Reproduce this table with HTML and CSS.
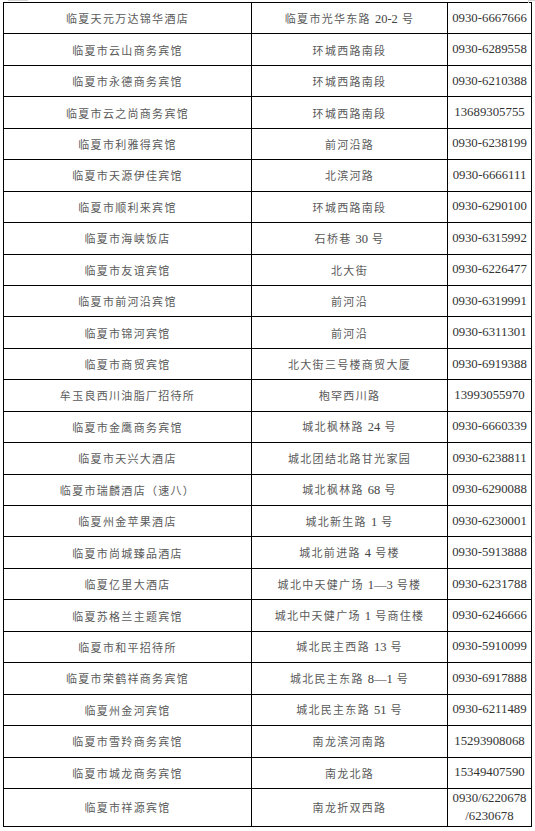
FILE: index.html
```html
<!DOCTYPE html>
<html lang="zh-CN">
<head>
<meta charset="utf-8">
<title>临夏宾馆列表</title>
<link rel="stylesheet" href="styles.css">
</head>
<body>
<div class="mark mark-tl"></div>
<div class="mark mark-tr"></div>
<table class="list">
<colgroup><col class="c1"><col class="c2"><col class="c3"></colgroup>
<tbody>
<tr><td>临夏天元万达锦华酒店</td><td>临夏市光华东路 <span class="num">20-2</span> 号</td><td class="tel">0930-6667666</td></tr>
<tr><td>临夏市云山商务宾馆</td><td>环城西路南段</td><td class="tel">0930-6289558</td></tr>
<tr><td>临夏市永德商务宾馆</td><td>环城西路南段</td><td class="tel">0930-6210388</td></tr>
<tr><td>临夏市云之尚商务宾馆</td><td>环城西路南段</td><td class="tel">13689305755</td></tr>
<tr><td>临夏市利雅得宾馆</td><td>前河沿路</td><td class="tel">0930-6238199</td></tr>
<tr><td>临夏市天源伊佳宾馆</td><td>北滨河路</td><td class="tel">0930-6666111</td></tr>
<tr><td>临夏市顺利来宾馆</td><td>环城西路南段</td><td class="tel">0930-6290100</td></tr>
<tr><td>临夏市海峡饭店</td><td>石桥巷 <span class="num">30</span> 号</td><td class="tel">0930-6315992</td></tr>
<tr><td>临夏市友谊宾馆</td><td>北大街</td><td class="tel">0930-6226477</td></tr>
<tr><td>临夏市前河沿宾馆</td><td>前河沿</td><td class="tel">0930-6319991</td></tr>
<tr><td>临夏市锦河宾馆</td><td>前河沿</td><td class="tel">0930-6311301</td></tr>
<tr><td>临夏市商贸宾馆</td><td>北大街三号楼商贸大厦</td><td class="tel">0930-6919388</td></tr>
<tr><td>牟玉良西川油脂厂招待所</td><td>枹罕西川路</td><td class="tel">13993055970</td></tr>
<tr><td>临夏市金鹰商务宾馆</td><td>城北枫林路 <span class="num">24</span> 号</td><td class="tel">0930-6660339</td></tr>
<tr><td>临夏市天兴大酒店</td><td>城北团结北路甘光家园</td><td class="tel">0930-6238811</td></tr>
<tr><td>临夏市瑞麟酒店（速八）</td><td>城北枫林路 <span class="num">68</span> 号</td><td class="tel">0930-6290088</td></tr>
<tr><td>临夏州金苹果酒店</td><td>城北新生路 <span class="num">1</span> 号</td><td class="tel">0930-6230001</td></tr>
<tr><td>临夏市尚城臻品酒店</td><td>城北前进路 <span class="num">4</span> 号楼</td><td class="tel">0930-5913888</td></tr>
<tr><td>临夏亿里大酒店</td><td>城北中天健广场 <span class="num">1—3</span> 号楼</td><td class="tel">0930-6231788</td></tr>
<tr><td>临夏苏格兰主题宾馆</td><td>城北中天健广场 <span class="num">1</span> 号商住楼</td><td class="tel">0930-6246666</td></tr>
<tr><td>临夏市和平招待所</td><td>城北民主西路 <span class="num">13</span> 号</td><td class="tel">0930-5910099</td></tr>
<tr><td>临夏市荣鹤祥商务宾馆</td><td>城北民主东路 <span class="num">8—1</span> 号</td><td class="tel">0930-6917888</td></tr>
<tr><td>临夏州金河宾馆</td><td>城北民主东路 <span class="num">51</span> 号</td><td class="tel">0930-6211489</td></tr>
<tr><td>临夏市雪羚商务宾馆</td><td>南龙滨河南路</td><td class="tel">15293908068</td></tr>
<tr><td>临夏市城龙商务宾馆</td><td>南龙北路</td><td class="tel">15349407590</td></tr>
<tr class="tall"><td>临夏市祥源宾馆</td><td>南龙折双西路</td><td class="tel">0930/6220678<br>/6230678</td></tr>
</tbody>
</table>
</body>
</html>
```
FILE: styles.css
```css
html, body {
  margin: 0;
  padding: 0;
  background: #ffffff;
}
body {
  position: relative;
  width: 535px;
  height: 831px;
  overflow: hidden;
  font-family: "Liberation Serif", "Noto Sans CJK SC", serif;
}
.mark {
  position: absolute;
  background: #d4d4d4;
}
.mark-tl {
  left: 8px;
  top: 0;
  width: 20px;
  height: 1px;
}
.mark-tr {
  left: 528px;
  top: 0;
  width: 7px;
  height: 1px;
}
.mark-tr::after {
  content: "";
  position: absolute;
  left: 0;
  top: 0;
  width: 1px;
  height: 3px;
  background: #d4d4d4;
}
.list {
  border-collapse: collapse;
  table-layout: fixed;
  margin: 2px 0 0 3px;
  width: 528px;
}
.c1 { width: 248px; }
.c2 { width: 196px; }
.c3 { width: 84px; }
.list td {
  border: 1px solid #000;
  height: 30.45px;
  padding: 0;
  text-align: center;
  vertical-align: middle;
  font-size: 11px;
  letter-spacing: 1.3px;
  color: #5a5a5a;
  white-space: nowrap;
}
.list td .num {
  font-size: 12.5px;
  letter-spacing: 0;
  color: #444;
}
.list td.tel {
  font-size: 12.8px;
  letter-spacing: 0;
  color: #333;
}
.list tr.tall td {
  height: 37px;
}
.list tr.tall td.tel {
  line-height: 18px;
}
```
